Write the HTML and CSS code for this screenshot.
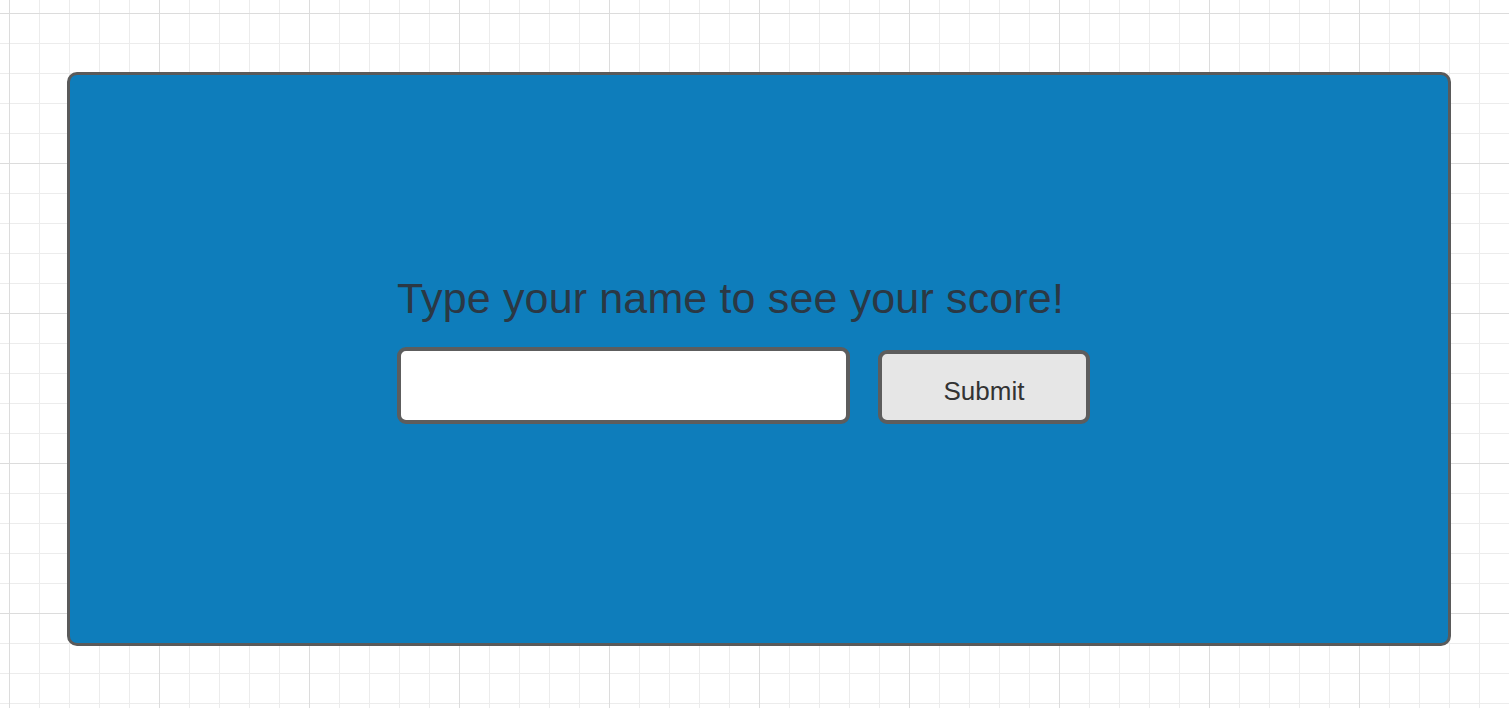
FILE: index.html
```html
<!DOCTYPE html>
<html>
<head>
<meta charset="utf-8">
<link rel="stylesheet" href="styles.css">
</head>
<body>
<main class="canvas">
  <section class="card">
    <div class="content">
      <h1 class="title">Type your name to see your score!</h1>
      <form class="row" onsubmit="return false">
        <input class="name-input" type="text" aria-label="Name">
        <button class="submit" type="submit">Submit</button>
      </form>
    </div>
  </section>
</main>
</body>
</html>
```

FILE: styles.css
```css
html, body {
  margin: 0;
  padding: 0;
}
body {
  width: 1509px;
  height: 708px;
  overflow: hidden;
  font-family: "Liberation Sans", Arial, sans-serif;
  background-color: #ffffff;
  background-image:
    linear-gradient(to right, #dcdcdc 1px, transparent 1px),
    linear-gradient(to bottom, #dcdcdc 1px, transparent 1px),
    linear-gradient(to right, #ececec 1px, transparent 1px),
    linear-gradient(to bottom, #ececec 1px, transparent 1px);
  background-size: 150px 150px, 150px 150px, 30px 30px, 30px 30px;
  background-position: 9px 13px, 9px 13px, 9px 13px, 9px 13px;
}
.canvas {
  padding: 72px 0 0 67px;
}
.card {
  box-sizing: border-box;
  width: 1384px;
  height: 574px;
  background: #0e7dbb;
  border: 3px solid #5a5a5a;
  border-radius: 10px;
  display: flex;
}
.content {
  padding: 200px 0 0 327px;
}
.title {
  margin: 0 0 26px 0;
  font-size: 43px;
  letter-spacing: 0.15px;
  line-height: 46px;
  font-weight: normal;
  color: #2b3844;
  white-space: nowrap;
}
.row {
  display: flex;
  align-items: flex-end;
  gap: 28px;
  margin: 0;
}
.name-input {
  box-sizing: border-box;
  width: 453px;
  height: 77px;
  margin: 0;
  border: 4px solid #5d5d5d;
  border-radius: 9px;
  background: #ffffff;
  outline: none;
  font-family: "Liberation Sans", Arial, sans-serif;
  font-size: 24px;
}
.submit {
  box-sizing: border-box;
  width: 212px;
  height: 74px;
  margin: 0;
  padding: 8px 0 0 0;
  border: 4px solid #5d5d5d;
  border-radius: 9px;
  background: #e6e6e6;
  color: #333333;
  font-family: "Liberation Sans", Arial, sans-serif;
  font-size: 26px;
  line-height: 30px;
}
```
